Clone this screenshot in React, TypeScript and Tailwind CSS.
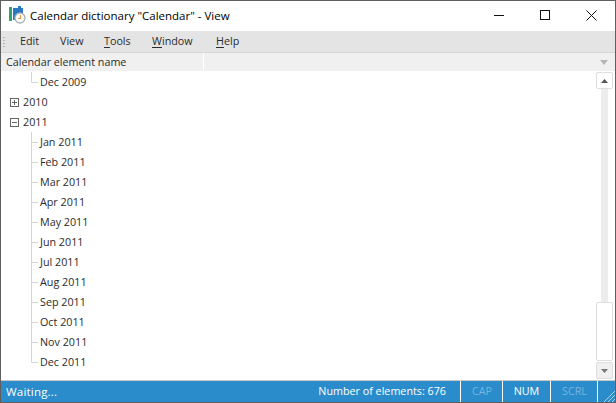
const months = ['Jan', 'Feb', 'Mar', 'Apr', 'May', 'Jun', 'Jul', 'Aug', 'Sep', 'Oct', 'Nov', 'Dec']

function Connector({ last }: { last?: boolean }) {
  return (
    <svg width="9" height="20" className="ml-[30px] shrink-0" fill="none" stroke="#d4d4d4">
      <path d={last ? 'M.5 0V10.5H7' : 'M.5 0V20M.5 10.5H7'} />
    </svg>
  )
}

function ChildRow({ label, last }: { label: string; last?: boolean }) {
  return (
    <div className="flex h-5 items-center">
      <Connector last={last} />
      <span>{label}</span>
    </div>
  )
}

function YearRow({ label, open }: { label: string; open?: boolean }) {
  return (
    <div className="flex h-5 items-center">
      <svg width="9" height="9" className="ml-[9px] mr-[4px] shrink-0" fill="none" stroke="#666">
        <rect x=".5" y=".5" width="8" height="8" />
        <path d={open ? 'M2 4.5H7' : 'M2 4.5H7M4.5 2V7'} />
      </svg>
      <span>{label}</span>
    </div>
  )
}

function MenuItem({ label, u, w }: { label: string; u?: string; w: string }) {
  const rest = u ? label.slice(1) : label
  return (
    <span className={w}>
      {u ? <span className="underline underline-offset-2">{u}</span> : null}
      {rest}
    </span>
  )
}

export default function App() {
  return (
    <div className="flex h-[403px] w-[616px] flex-col overflow-hidden border border-[#5f5f5f] bg-white font-['Open_Sans',sans-serif] text-[10.75px] text-[#2b2b2b]">
      <div className="flex h-[30px] shrink-0 items-center">
        <svg width="18" height="18" viewBox="0 0 18 18" className="ml-2 mb-[2px] shrink-0" fill="none">
          <rect x="0" y="1" width="3" height="14" fill="#2ea56f" />
          <rect x="4" y="2" width="10" height="12" fill="#2a78c2" />
          <rect x="9" y="0" width="3" height="3" fill="#2a78c2" />
          <circle cx="11" cy="12" r="5" fill="#fff" stroke="#a9b0b8" strokeWidth="1.3" />
          <path d="M11.5 9V12.5H9" stroke="#e8963a" strokeWidth="1.2" />
        </svg>
        <span className="ml-[3px] text-[11.5px] text-black">Calendar dictionary "Calendar" - View</span>
        <div className="ml-auto flex items-center">
          <svg width="12" height="12" className="mr-[34px]" stroke="#111" fill="none">
            <path d="M1 5.5H11" />
          </svg>
          <svg width="12" height="12" className="mr-[35px]" stroke="#111" fill="none">
            <rect x="1.5" y=".5" width="9" height="9" />
          </svg>
          <svg width="12" height="12" className="mr-[17px]" stroke="#111" fill="none">
            <path d="M.5 .5L10.5 10.5M10.5 .5L.5 10.5" />
          </svg>
        </div>
      </div>

      <div className="flex h-[22px] shrink-0 items-center border-b border-[#d6d6d6] bg-[#e4e4e4]">
        <svg width="2" height="10" className="ml-[2px] mr-[15px] shrink-0" fill="#b4b4b4">
          <rect y="0" width="2" height="1" />
          <rect y="3" width="2" height="1" />
          <rect y="6" width="2" height="1" />
          <rect y="9" width="2" height="1" />
        </svg>
        <MenuItem label="Edit" w="w-[40px]" />
        <MenuItem label="View" w="w-[44px]" />
        <MenuItem label="Tools" u="T" w="w-[48px]" />
        <MenuItem label="Window" u="W" w="w-[64px]" />
        <MenuItem label="Help" u="H" w="w-[40px]" />
      </div>

      <div className="flex h-[18px] shrink-0 items-center bg-[#f0f0f0] pl-[5px]">
        <div className="flex h-full w-[198px] items-center border-r border-white">Calendar element name</div>
        <svg width="8" height="5" className="ml-auto mr-[7px]" fill="#b5b5b5">
          <path d="M0 0H8L4 5Z" />
        </svg>
      </div>

      <div className="flex min-h-0 flex-1 pt-px">
        <div className="min-w-0 flex-1">
          <ChildRow label="Dec 2009" last />
          <YearRow label="2010" />
          <YearRow label="2011" open />
          {months.map((m, i) => (
            <ChildRow key={m} label={`${m} 2011`} last={i === months.length - 1} />
          ))}
        </div>

        <div className="mr-[2px] flex w-[17px] shrink-0 flex-col items-center">
          <div className="flex h-[17px] w-[17px] shrink-0 items-center justify-center rounded-[2px] border border-[#dedede] bg-white">
            <svg width="7" height="4" fill="#555">
              <path d="M0 4H7L3.5 0Z" />
            </svg>
          </div>
          <div className="w-[7px] flex-1 bg-[#ececec]" />
          <div className="h-[59px] w-[17px] shrink-0 rounded-[2px] border border-[#dedede] bg-white" />
          <div className="mt-px mb-px flex h-[17px] w-[17px] shrink-0 items-center justify-center rounded-[2px] border border-[#dedede] bg-[#f0f0f0]">
            <svg width="7" height="4" fill="#777">
              <path d="M0 0H7L3.5 4Z" />
            </svg>
          </div>
        </div>
      </div>

      <div className="h-px shrink-0 bg-[#c8c8c8]" />
      <div className="flex h-[21px] shrink-0 items-stretch bg-[#2b8ccb] text-white">
        <span className="self-center pl-[5px] text-[11.5px] tracking-[0.2px]">Waiting...</span>
        <span className="ml-auto self-center pr-[14px]">Number of elements: 676</span>
        <div className="flex w-[42px] items-center justify-center border-l border-white pl-px text-[#76b5e0]">CAP</div>
        <div className="flex w-[48px] items-center justify-center border-l border-white">NUM</div>
        <div className="flex w-[47px] items-center justify-center border-l border-white pl-px text-[#76b5e0]">SCRL</div>
        <div className="relative w-[18px] border-l border-white">
          <svg width="12" height="12" className="absolute right-0 bottom-0" stroke="#a8d0ea" fill="none">
            <path d="M12 1L1 12M12 5L5 12M12 9L9 12" />
          </svg>
        </div>
      </div>
    </div>
  )
}
